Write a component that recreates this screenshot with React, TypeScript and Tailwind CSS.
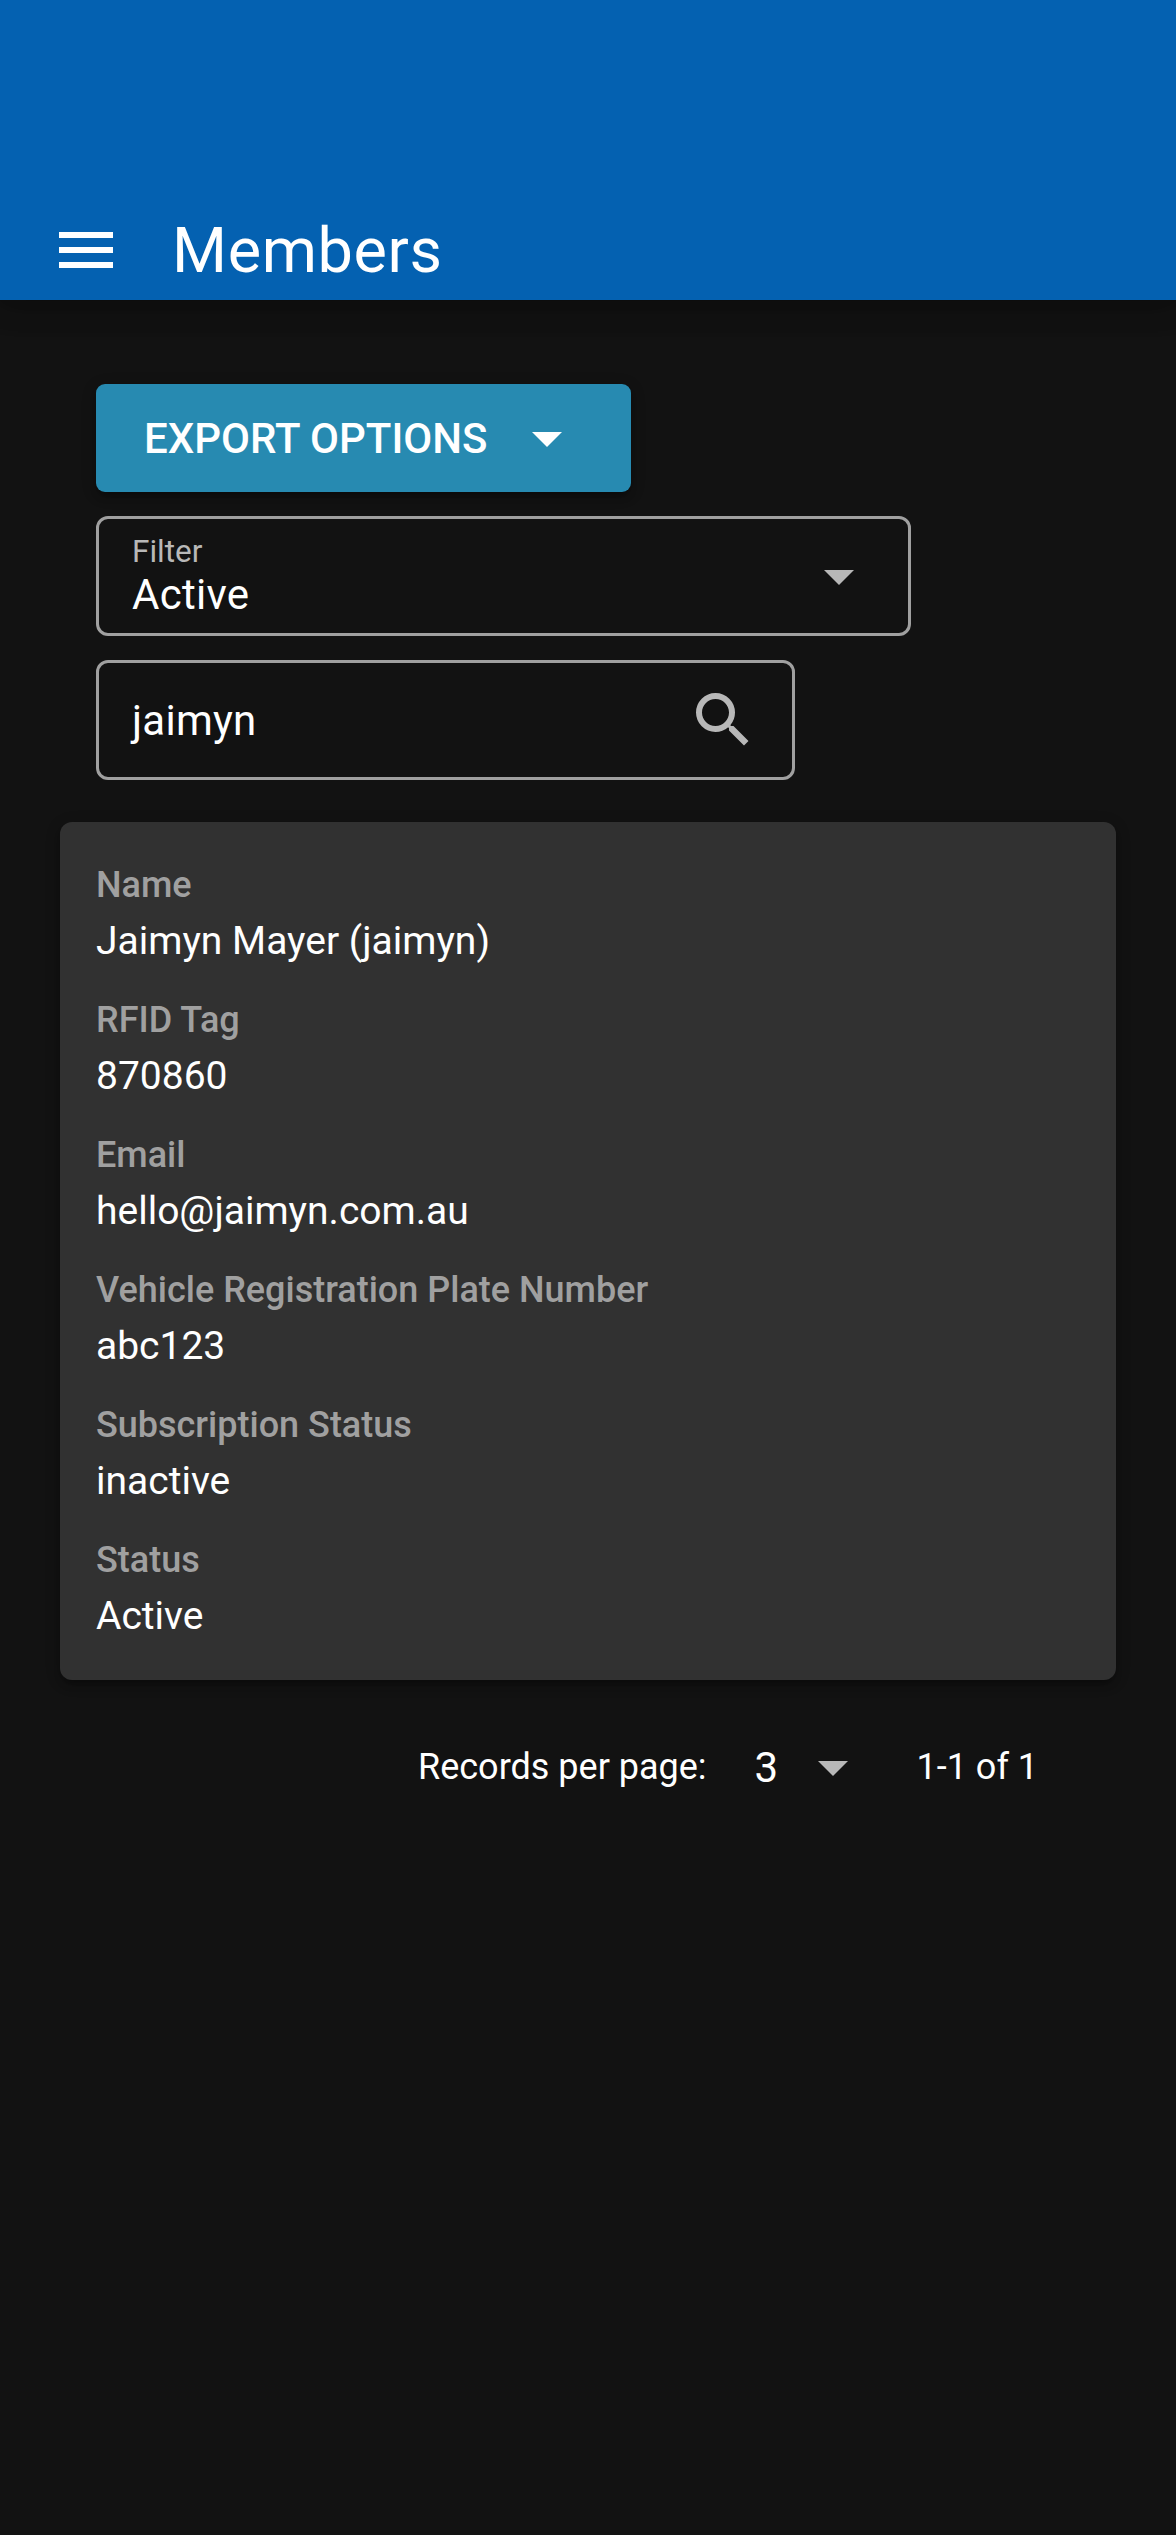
const fields = [
  ['Name', 'Jaimyn Mayer (jaimyn)'],
  ['RFID Tag', '870860'],
  ['Email', 'hello@jaimyn.com.au'],
  ['Vehicle Registration Plate Number', 'abc123'],
  ['Subscription Status', 'inactive'],
  ['Status', 'Active'],
];

function Caret({ className }: { className: string }) {
  return (
    <svg viewBox="0 0 24 24" fill="currentColor" className={className}>
      <path d="M7 10l5 5 5-5z" />
    </svg>
  );
}

export default function App() {
  return (
    <div className="flex h-[2535px] w-[1176px] flex-col bg-[#121212] font-[Roboto,sans-serif] text-white">
      <header className="flex h-[300px] items-end bg-[#0461b1] shadow-[0_0_30px_6px_rgba(0,0,0,0.2),0_0_30px_rgba(0,0,0,0.24)]">
        <div className="flex h-[100px] items-center pl-[50px]">
          <svg viewBox="0 0 24 24" fill="currentColor" className="size-[72px]">
            <path d="M3 18h18v-2H3v2zm0-5h18v-2H3v2zm0-7v2h18V6H3z" />
          </svg>
          <h1 className="ml-[50px] pt-[3px] text-[63px] tracking-[0.63px]">Members</h1>
        </div>
      </header>
      <main className="flex flex-col px-[60px] pt-[84px]">
        <div className="flex flex-col items-start pl-9">
          <button className="flex h-[108px] w-[535px] items-center rounded-[9px] bg-[#278ab1] pl-12 text-left text-[42px] font-medium shadow-[0_3px_15px_rgba(0,0,0,0.2),0_6px_6px_rgba(0,0,0,0.14),0_9px_3px_-6px_rgba(0,0,0,0.12)]">
            <span className="w-[367px] pt-px leading-[63px] whitespace-nowrap">EXPORT OPTIONS</span>
            <Caret className="size-[72px]" />
          </button>
          <div className="mt-6 flex h-[120px] w-[815px] items-center justify-between rounded-xl border-3 border-[#a0a0a0] px-[33px]">
            <div className="pt-px">
              <div className="text-[31.5px] leading-[36px] text-[#b8b8b8]">Filter</div>
              <div className="text-[42px] leading-[50px] tracking-[0.26px]">Active</div>
            </div>
            <Caret className="size-[72px] text-[#b8b8b8]" />
          </div>
          <div className="mt-6 flex h-[120px] w-[699px] items-center justify-between rounded-xl border-3 border-[#a0a0a0] px-[33px] text-[42px]">
            <span className="pt-px leading-[63px] tracking-[0.26px]">jaimyn</span>
            <svg viewBox="0 0 24 24" fill="#b8b8b8" className="size-[72px]">
              <path d="M15.5 14h-.79l-.28-.27A6.47 6.47 0 0 0 16 9.5 6.5 6.5 0 1 0 9.5 16c1.61 0 3.09-.59 4.23-1.57l.27.28v.79l5 4.99L20.49 19l-4.99-5zm-6 0C7.01 14 5 11.99 5 9.5S7.01 5 9.5 5 14 7.01 14 9.5 11.99 14 9.5 14z" />
            </svg>
          </div>
        </div>
        <section className="mt-[42px] flex h-[858px] flex-col gap-[15px] rounded-xl bg-[#313131] px-9 pt-9 shadow-[0_3px_15px_rgba(0,0,0,0.2),0_6px_6px_rgba(0,0,0,0.14),0_9px_3px_-6px_rgba(0,0,0,0.12)]">
          {fields.map(([label, value]) => (
            <div key={label} className="h-[120px]">
              <div className="text-[36px] leading-[54px] font-medium text-[#a0a0a0]">{label}</div>
              <div className="text-[39px] leading-[58px]">{value}</div>
            </div>
          ))}
        </section>
        <footer className="mt-[41px] flex h-[92px] items-center pl-[358px] text-[36px]">
          <span className="w-[336.5px]">Records per page:</span>
          <span className="w-[42px] text-[42px]">3</span>
          <Caret className="size-[72px] text-[#b8b8b8]" />
          <span className="ml-12">1-1 of 1</span>
        </footer>
      </main>
    </div>
  );
}
